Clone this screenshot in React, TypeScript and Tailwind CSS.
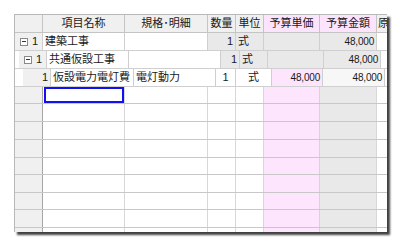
import React from "react";

type Cell = {
  w: number;
  text?: string;
  bg?: string;
  align?: "left" | "right" | "center";
  box?: boolean;
  num?: boolean;
};

const font = "font-['Liberation_Sans','Noto_Sans_CJK_JP',sans-serif]";

const header = [
  { w: 28, text: "", bg: "bg-[#f0f0f0]" },
  { w: 82, text: "項目名称", bg: "bg-[#f0f0f0]" },
  { w: 83, text: "規格･明細", bg: "bg-[#f0f0f0]" },
  { w: 28, text: "数量", bg: "bg-[#f0f0f0]" },
  { w: 28, text: "単位", bg: "bg-[#f0f0f0]" },
  { w: 56, text: "予算単価", bg: "bg-[#fce4fc]" },
  { w: 57, text: "予算金額", bg: "bg-[#fce4fc]" },
];

const dataRows: { indent: number; cells: Cell[] }[] = [
  {
    indent: 0,
    cells: [
      { w: 28, text: "1", bg: "bg-[#f0f0f0]", box: true },
      { w: 82, text: "建築工事" },
      { w: 83 },
      { w: 28, text: "1", bg: "bg-[#e9e9e9]", align: "right" },
      { w: 28, text: "式", bg: "bg-[#e9e9e9]" },
      { w: 56, bg: "bg-[#e9e9e9]" },
      { w: 57, text: "48,000", bg: "bg-[#e9e9e9]", align: "right", num: true },
      { w: 40 },
    ],
  },
  {
    indent: 4,
    cells: [
      { w: 28, text: "1", bg: "bg-[#f0f0f0]", box: true },
      { w: 82, text: "共通仮設工事" },
      { w: 92 },
      { w: 19, text: "1", bg: "bg-[#e9e9e9]", align: "right" },
      { w: 28, text: "式", bg: "bg-[#e9e9e9]" },
      { w: 56, bg: "bg-[#e9e9e9]" },
      { w: 57, text: "48,000", bg: "bg-[#e9e9e9]", align: "right", num: true },
      { w: 40 },
    ],
  },
  {
    indent: 8,
    cells: [
      { w: 28, text: "1", bg: "bg-[#f0f0f0]", align: "right" },
      { w: 83, text: "仮設電力電灯費" },
      { w: 82, text: "電灯動力" },
      { w: 20, text: "1", align: "center" },
      { w: 36, text: "式", align: "center" },
      { w: 51, text: "48,000", bg: "bg-[#fde6fd]", align: "right", num: true },
      { w: 62, text: "48,000", bg: "bg-[#f7f7f7]", align: "right", num: true },
      { w: 40 },
    ],
  },
];

const emptyHeights = [17, 18, 18, 18, 17, 18, 17, 18, 18];

function MinusBox() {
  return (
    <span className="inline-flex w-[8px] h-[8px] border border-[#8a8a8a] bg-white items-center justify-center mr-[4px]">
      <span className="block w-[4px] h-px bg-[#333]" />
    </span>
  );
}

function DataCell({ c }: { c: Cell }) {
  const justify =
    c.align === "right" ? "justify-end pr-[2px]" : c.align === "center" ? "justify-center" : "justify-start pl-[2px]";
  return (
    <div
      className={`h-full shrink-0 flex items-center border-r border-[#cfcfcf] overflow-hidden whitespace-nowrap ${justify} ${c.bg ?? "bg-white"} ${c.num ? "text-[10px] tracking-[-0.2px]" : ""}`}
      style={{ width: c.w }}
    >
      {c.box && <span className="pl-[3px] flex items-center"><MinusBox /></span>}
      {c.box && <span className="mr-auto">{c.text}</span>}
      {!c.box && c.text}
    </div>
  );
}

export default function App() {
  return (
    <div className={`w-[400px] h-[245px] bg-white pt-[14px] pl-[14px] ${font} text-[11px] text-[#1a1a1a]`}>
      <div className="w-[373px] h-[218px] overflow-hidden border-l border-t border-[#b8b8b8] bg-white shadow-[3px_3px_2px_rgba(0,0,0,0.75)] flex flex-col">
        {/* header */}
        <div className="flex h-[18px] shrink-0 border-b border-[#c4c4c4]">
          {header.map((h, i) => (
            <div
              key={i}
              className={`h-full shrink-0 flex items-center justify-center border-r border-[#c4c4c4] whitespace-nowrap overflow-hidden ${h.bg}`}
              style={{ width: h.w }}
            >
              {h.text}
            </div>
          ))}
          <div className="h-full w-[40px] shrink-0 flex items-center pl-[1px] bg-[#f0f0f0] whitespace-nowrap">原</div>
        </div>

        {/* item rows */}
        {dataRows.map((r, i) => (
          <div key={i} className="flex h-[18px] shrink-0 border-b border-[#cfcfcf] bg-white" style={{ paddingLeft: r.indent }}>
            {r.cells.map((c, j) => (
              <DataCell key={j} c={c} />
            ))}
          </div>
        ))}

        {/* empty rows */}
        {emptyHeights.map((h, i) => (
          <div key={i} className="flex shrink-0 border-b border-[#c8c8c8]" style={{ height: h }}>
            <div className="w-[28px] shrink-0 h-full bg-[#f0f0f0] border-r border-[#a6a6a6]" />
            <div className="w-[82px] shrink-0 h-full border-r border-[#d8d8d8] bg-white">
              {i === 0 && <div className="h-full border-2 border-[#1010f0] ml-[1px]" />}
            </div>
            <div className="w-[83px] shrink-0 h-full border-r border-[#d8d8d8] bg-white" />
            <div className="w-[28px] shrink-0 h-full border-r border-[#d8d8d8] bg-white" />
            <div className="w-[28px] shrink-0 h-full border-r border-[#d8d8d8] bg-white" />
            <div className="w-[56px] shrink-0 h-full border-r border-[#e2cce2] bg-[#fde6fd]" />
            <div className="w-[57px] shrink-0 h-full border-r border-[#d8d8d8] bg-[#e9e9e9]" />
            <div className="w-[40px] shrink-0 h-full bg-white" />
          </div>
        ))}
      </div>
    </div>
  );
}
